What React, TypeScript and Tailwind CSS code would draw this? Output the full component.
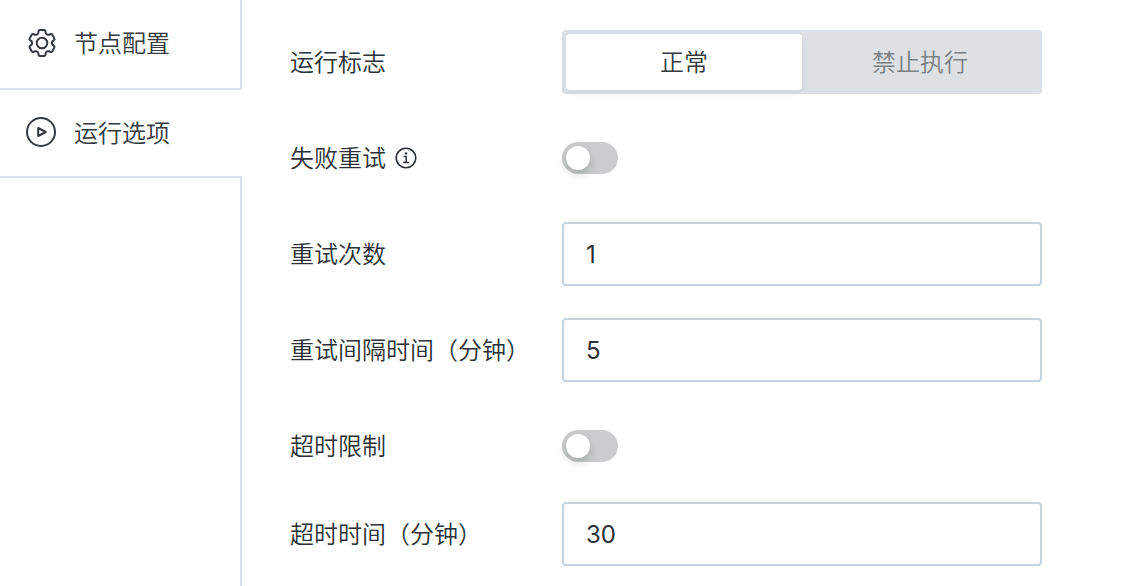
import { useState } from "react";
import type { ReactNode } from "react";

type Point = [number, number];

function gearPath(cx: number, cy: number): string {
  const tooth: Point[] = [
    [-3.9, -9.2],
    [-3.2, -13],
    [3.2, -13],
    [3.9, -9.2],
  ];
  const points: Point[] = [];
  for (let i = 0; i < 6; i++) {
    const a = (i * Math.PI) / 3;
    for (const [x, y] of tooth) {
      points.push([
        cx + x * Math.cos(a) - y * Math.sin(a),
        cy + x * Math.sin(a) + y * Math.cos(a),
      ]);
    }
  }
  const radius = 1;
  const toward = (p: Point, q: Point): string => {
    const d = Math.hypot(q[0] - p[0], q[1] - p[1]);
    const t = Math.min(radius / d, 0.5);
    return `${(p[0] + (q[0] - p[0]) * t).toFixed(2)} ${(p[1] + (q[1] - p[1]) * t).toFixed(2)}`;
  };
  const n = points.length;
  const parts = points.map((p, i) => {
    const before = toward(p, points[(i + n - 1) % n]);
    const after = toward(p, points[(i + 1) % n]);
    return `${i === 0 ? "M" : "L"}${before} Q${p[0].toFixed(2)} ${p[1].toFixed(2)} ${after}`;
  });
  return parts.join(" ") + "Z";
}

function GearIcon() {
  return (
    <svg viewBox="0 0 32 32" className="size-8 shrink-0" fill="none" stroke="currentColor" strokeWidth="2" strokeLinejoin="round" aria-hidden="true">
      <path d={gearPath(16, 16)} />
      <circle cx="16" cy="16" r="5.3" />
    </svg>
  );
}

function PlayIcon() {
  return (
    <svg viewBox="0 0 32 32" className="size-8 shrink-0" fill="none" stroke="currentColor" strokeWidth="2" strokeLinejoin="round" aria-hidden="true">
      <circle cx="15" cy="15" r="14" />
      <path d="M12.2 11v8l7.6-4z" />
    </svg>
  );
}

function InfoIcon() {
  return (
    <svg viewBox="0 0 24 24" className="size-6 shrink-0" fill="none" stroke="currentColor" aria-hidden="true">
      <circle cx="12" cy="12" r="9.8" strokeWidth="1.6" />
      <path d="M9.6 10.6h2.6v5.8M9.2 16.5h5.8" strokeWidth="1.5" />
      <circle cx="12" cy="7.4" r="1.2" fill="currentColor" stroke="none" />
    </svg>
  );
}

function Row({ id, label, icon, children }: { id: string; label: string; icon?: ReactNode; children: ReactNode }) {
  return (
    <div className="flex min-h-16 items-center">
      <div className="flex w-[272px] shrink-0 items-center gap-2">
        <label id={`${id}-label`} htmlFor={id} className="pt-0.5 whitespace-nowrap">
          {label}
        </label>
        {icon}
      </div>
      <div className="flex min-w-0 flex-1">{children}</div>
    </div>
  );
}

function Toggle({ id }: { id: string }) {
  return (
    <input
      id={id}
      type="checkbox"
      role="switch"
      className="flex h-8 w-14 cursor-pointer appearance-none items-center rounded-full bg-[#cbcccd] p-1 before:size-6 before:rounded-full before:bg-white before:shadow-[0_4px_8px_rgba(0,35,11,0.2)] before:transition-transform checked:bg-blue-500 checked:before:translate-x-6"
    />
  );
}

function TextField({ id, value }: { id: string; value: string }) {
  return (
    <input
      id={id}
      type="text"
      inputMode="numeric"
      defaultValue={value}
      className="h-16 w-full min-w-0 rounded border-2 border-[#cbd3da] bg-white px-[22px] text-2xl font-normal outline-none focus:border-blue-500"
    />
  );
}

export default function App() {
  const [mode, setMode] = useState("正常");

  return (
    <div className="flex min-h-screen bg-white font-['Inter','Noto_Sans_CJK_SC',sans-serif] text-2xl font-[350] text-[#2b3136]">
      <nav className="flex w-[242px] shrink-0 flex-col text-[#343a40]">
        <a href="#config" className="flex h-[90px] items-center gap-4 border-r-2 border-b-2 border-[#dde0e5] pb-0.5 pl-[26px]">
          <GearIcon />
          <span className="pt-0.5">节点配置</span>
        </a>
        <a href="#options" aria-current="page" className="flex h-[86px] items-center gap-4 pl-[26px]">
          <PlayIcon />
          <span className="pt-0.5">运行选项</span>
        </a>
        <div className="flex-1 border-t-2 border-r-2 border-[#dde0e5]" />
      </nav>

      <main className="flex min-w-0 flex-1 flex-col gap-6 pt-[30px] pr-20 pb-5 pl-12">
        <div className="flex flex-col gap-8">
          <Row id="run-flag" label="运行标志">
            <div id="run-flag" role="group" aria-labelledby="run-flag-label" className="grid h-16 w-full grid-cols-2 rounded bg-[#dde0e5] p-1">
              {["正常", "禁止执行"].map((name) => (
                <button
                  key={name}
                  type="button"
                  aria-pressed={mode === name}
                  onClick={() => setMode(name)}
                  className={
                    mode === name
                      ? "cursor-pointer rounded bg-white pt-0.5 text-[#343a40] shadow-[0_2px_8px_rgba(52,58,64,0.08)]"
                      : "cursor-pointer rounded pt-0.5 text-[#7b8086]"
                  }
                >
                  {name}
                </button>
              ))}
            </div>
          </Row>
          <Row id="retry" label="失败重试" icon={<InfoIcon />}>
            <Toggle id="retry" />
          </Row>
          <Row id="retry-count" label="重试次数">
            <TextField id="retry-count" value="1" />
          </Row>
          <Row id="retry-interval" label="重试间隔时间（分钟）">
            <TextField id="retry-interval" value="5" />
          </Row>
          <Row id="timeout-limit" label="超时限制">
            <Toggle id="timeout-limit" />
          </Row>
        </div>
        <Row id="timeout" label="超时时间（分钟）">
          <TextField id="timeout" value="30" />
        </Row>
      </main>
    </div>
  );
}
